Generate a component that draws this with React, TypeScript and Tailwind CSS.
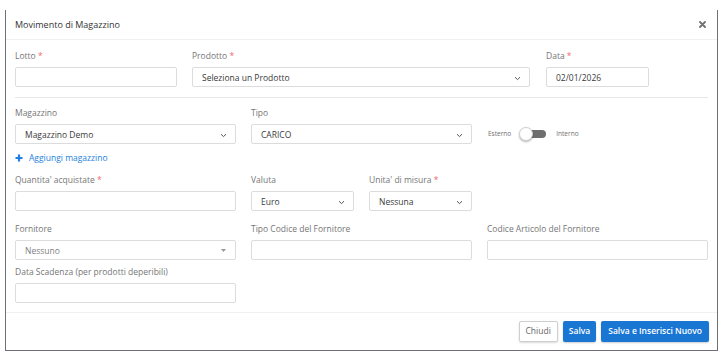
import React from "react";

const font = { fontFamily: '"Open Sans", "Noto Sans", sans-serif' };

function Label({ text, req }: { text: string; req?: boolean }) {
  return (
    <div className="h-[10px] text-[8.5px] leading-[10px] text-[#767676] mb-[6px] whitespace-nowrap">
      {text}
      {req && <span className="text-[#f06a6a]"> *</span>}
    </div>
  );
}

function Chevron() {
  return (
    <svg width="7" height="5" viewBox="0 0 7 5" className="absolute right-[8px] top-[8px]">
      <path d="M1 1.2 L3.5 3.6 L6 1.2" fill="none" stroke="#555" strokeWidth="1" />
    </svg>
  );
}

function Box({ w, value, chevron, caret, muted }: { w: string; value?: string; chevron?: boolean; caret?: boolean; muted?: boolean }) {
  return (
    <div className={`relative h-[20px] ${w} border border-[#dcdcdc] rounded-[2px] bg-white`}>
      {value && (
        <span className={`absolute left-[9px] top-[4px] text-[8.5px] leading-[11px] ${muted ? "text-[#808080]" : "text-[#3a3a3a]"}`}>
          {value}
        </span>
      )}
      {chevron && <Chevron />}
      {caret && (
        <svg width="5" height="3" viewBox="0 0 5 3" className="absolute right-[9px] top-[8px]">
          <path d="M0 0 L5 0 L2.5 3 Z" fill="#999" />
        </svg>
      )}
    </div>
  );
}

export default function App() {
  return (
    <div className="w-[727px] h-[361px] bg-white relative overflow-hidden" style={font}>
      <div className="absolute left-[5px] top-[10px] w-[713px] h-[341px] border-l-[1.5px] border-r-[1.5px] border-b-[1.5px] border-[#6e6f78] bg-white flex flex-col">
        {/* header */}
        <div className="h-[30px] border-b border-[#f0f0f0] flex items-center justify-between pl-[9px] pr-[11px]">
          <span className="text-[9px] text-[#333]">Movimento di Magazzino</span>
          <svg width="7" height="7" viewBox="0 0 7 7">
            <path d="M1 1 L6 6 M6 1 L1 6" stroke="#707070" strokeWidth="1.8" strokeLinecap="round" />
          </svg>
        </div>
        {/* body */}
        <div className="flex flex-col pl-[9px] pr-[8px] pt-[11px] flex-1">
          <div className="flex">
            <div className="w-[162px]">
              <Label text="Lotto" req />
              <Box w="w-[162px]" />
            </div>
            <div className="w-[338px] ml-[15px]">
              <Label text="Prodotto" req />
              <Box w="w-[338px]" value="Seleziona un Prodotto" chevron />
            </div>
            <div className="w-[103px] ml-[16px]">
              <Label text="Data" req />
              <Box w="w-[103px]" value="02/01/2026" />
            </div>
          </div>
          <div className="h-px bg-[#e6e6e6] mt-[10px] w-[693px]" />
          <div className="flex mt-[10px]">
            <div className="w-[221px]">
              <Label text="Magazzino" />
              <Box w="w-[221px]" value="Magazzino Demo" chevron />
            </div>
            <div className="w-[221px] ml-[15px]">
              <Label text="Tipo" />
              <Box w="w-[221px]" value="CARICO" chevron />
            </div>
            <div className="ml-[16px] mt-[16px] flex items-center h-[20px]">
              <span className="text-[6.5px] text-[#707070]">Esterno</span>
              <div className="relative ml-[8px] w-[28px] h-[14px]">
                <div className="absolute left-[5px] top-[3px] w-[22px] h-[8px] rounded-full bg-[#6e6e6e]" />
                <div className="absolute left-0 top-0 w-[14px] h-[14px] rounded-full bg-white border border-[#d0d0d0] shadow-[0_1px_2px_rgba(0,0,0,0.3)]" />
              </div>
              <span className="text-[6.5px] text-[#707070] ml-[9px]">Interno</span>
            </div>
          </div>
          <div className="flex items-center mt-[8px] h-[12px] text-[#1e7fe0] text-[8.5px]">
            <svg width="8" height="8" viewBox="0 0 8 8" className="mr-[6px]">
              <path d="M4 0.5 V7.5 M0.5 4 H7.5" stroke="#1e7fe0" strokeWidth="2.2" />
            </svg>
            <span>Aggiungi magazzino</span>
          </div>
          <div className="flex mt-[11px]">
            <div className="w-[221px]">
              <Label text="Quantita' acquistate" req />
              <Box w="w-[221px]" />
            </div>
            <div className="w-[103px] ml-[15px]">
              <Label text="Valuta" />
              <Box w="w-[103px]" value="Euro" chevron />
            </div>
            <div className="w-[103px] ml-[15px]">
              <Label text="Unita' di misura" req />
              <Box w="w-[103px]" value="Nessuna" chevron />
            </div>
          </div>
          <div className="flex mt-[13px]">
            <div className="w-[221px]">
              <Label text="Fornitore" />
              <Box w="w-[221px]" value="Nessuno" caret muted />
            </div>
            <div className="w-[221px] ml-[15px]">
              <Label text="Tipo Codice del Fornitore" />
              <Box w="w-[221px]" />
            </div>
            <div className="w-[221px] ml-[15px]">
              <Label text="Codice Articolo del Fornitore" />
              <Box w="w-[221px]" />
            </div>
          </div>
          <div className="mt-[7px] w-[221px]">
            <Label text="Data Scadenza (per prodotti deperibili)" />
            <Box w="w-[221px]" />
          </div>
        </div>
        {/* footer */}
        <div className="h-[38px] border-t border-[#f0f0f0] flex items-center justify-end pr-[8px] gap-[5px]">
          <button className="h-[21px] px-[6px] border border-[#cfcfcf] rounded-[2px] bg-white text-[8.5px] text-[#666] shadow-[0_1px_2px_rgba(0,0,0,0.15)]">
            Chiudi
          </button>
          <button className="h-[21px] px-[6px] rounded-[2px] bg-[#1976d2] text-[8.5px] font-semibold text-white shadow-[0_1px_2px_rgba(0,0,0,0.2)]">
            Salva
          </button>
          <button className="h-[21px] px-[7px] rounded-[2px] bg-[#1976d2] text-[8.5px] font-semibold text-white shadow-[0_1px_2px_rgba(0,0,0,0.2)]">
            Salva e Inserisci Nuovo
          </button>
        </div>
      </div>
    </div>
  );
}
